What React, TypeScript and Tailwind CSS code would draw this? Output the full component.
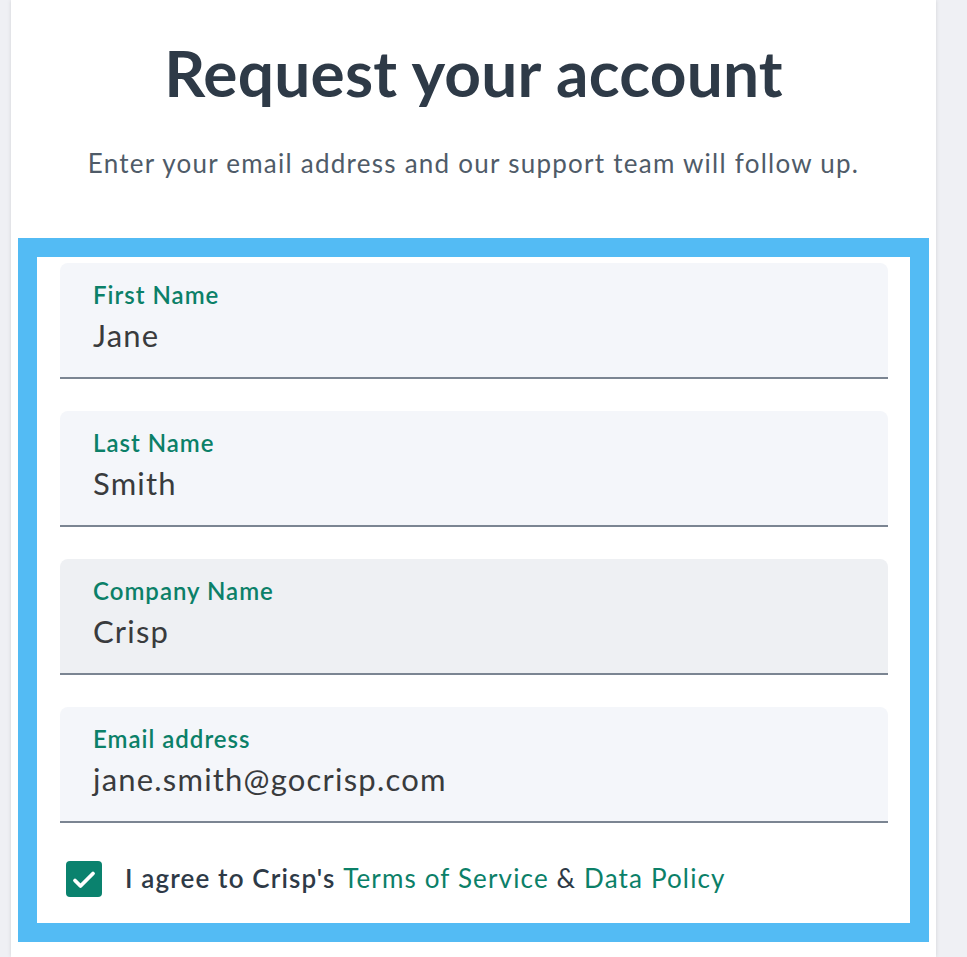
import React from "react";

const font = { fontFamily: "Lato, 'Noto Sans', sans-serif" };

function Field({ label, value, dim }: { label: string; value: string; dim?: boolean }) {
  return (
    <div
      className={`rounded-t-[8px] border-b-2 border-[#7b8592] pl-[33px] pt-[18px] h-[116px] ${
        dim ? "bg-[#eef0f3]" : "bg-[#f4f6fa]"
      }`}
    >
      <div className="text-[24px] leading-[28px] font-semibold tracking-[1px] text-[#0b8068]">{label}</div>
      <div className="mt-[8px] text-[31px] leading-[36px] tracking-[1.2px] text-[#393b3d]">{value}</div>
    </div>
  );
}

export default function App() {
  return (
    <div className="flex h-[957px] bg-[#eff0f4]" style={font}>
      <div className="w-[11px] shrink-0" />
      <div className="w-[925px] shrink-0 bg-white shadow-[0_0_4px_rgba(0,0,0,0.12)] flex flex-col">
        <h1 className="mt-[37px] text-center text-[64px] leading-[72px] font-bold tracking-[0.2px] text-[#2e3a47]">
          Request your account
        </h1>
        <p className="mt-[38px] text-center text-[26px] leading-[32px] tracking-[1.25px] text-[#4f5b68]">
          Enter your email address and our support team will follow up.
        </p>
        <div className="mt-[59px] mx-[7px] border-[19px] border-[#53bbf4]">
          <div className="pr-[22px] pl-[23px] pt-[6px] pb-[26px] flex flex-col gap-[32px]">
            <Field label="First Name" value="Jane" />
            <Field label="Last Name" value="Smith" />
            <Field label="Company Name" value="Crisp" dim />
            <Field label="Email address" value="jane.smith@gocrisp.com" />
            <div className="flex items-center mt-[6px] pl-[6px]">
              <div className="w-[36px] h-[36px] rounded-[4px] bg-[#0a826e]">
                <svg width="36" height="36" viewBox="0 0 36 36" fill="none">
                  <path d="M9 19.5l5.5 5.5L27 12.5" stroke="white" strokeWidth="3.8" strokeLinecap="round" strokeLinejoin="round" />
                </svg>
              </div>
              <div className="ml-[23px] -mt-[2px] text-[26px] leading-[32px] tracking-[1.15px] text-[#2e3a47]">
                <span className="font-semibold">I agree to Crisp's </span>
                <span className="text-[#0b8068]">Terms of Service</span>
                <span> &amp; </span>
                <span className="text-[#0b8068]">Data Policy</span>
              </div>
            </div>
          </div>
        </div>
      </div>
      <div className="flex-1" />
    </div>
  );
}
